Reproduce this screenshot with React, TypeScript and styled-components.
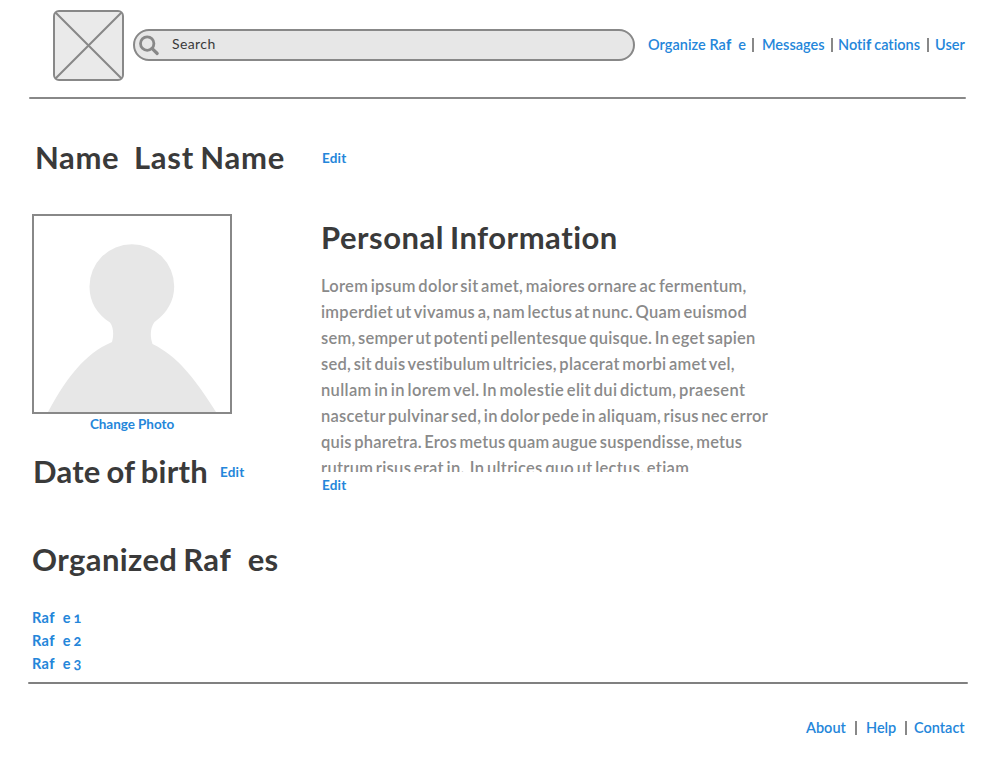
import React from "react";
import styled, { createGlobalStyle } from "styled-components";

const GlobalStyle = createGlobalStyle`
  * { box-sizing: border-box; }
  body {
    margin: 0;
    background: #fff;
    color: #3a3a3a;
    font-family: Lato, "Open Sans", sans-serif;
    font-variant-ligatures: none;
    font-variant-numeric: oldstyle-nums;
  }
`;

const Page = styled.div`
  width: 988px;
  height: 764px;
  overflow: hidden;
  display: flex;
  flex-direction: column;
`;

const Header = styled.header`
  height: 97px;
  flex: none;
  display: flex;
  align-items: flex-start;
  padding-left: 53px;
`;

const Logo = styled.svg`
  width: 71px;
  height: 71px;
  margin-top: 10px;
  flex: none;
`;

const SearchBox = styled.label`
  width: 502px;
  height: 32px;
  margin: 29px 0 0 9px;
  flex: none;
  display: flex;
  align-items: center;
  border: 2px solid #888;
  border-radius: 16px;
  background: #e7e7e7;
`;

const SearchIcon = styled.svg`
  width: 22px;
  height: 22px;
  margin-left: 3px;
`;

const SearchText = styled.span`
  margin: -3px 0 0 12px;
  font-size: 14px;
  letter-spacing: 0.4px;
`;

const HeaderNav = styled.nav`
  margin: 34px 0 0 13px;
  display: grid;
  grid-template-columns: 104px 10px 69px 7px 89px 8px auto;
  align-items: center;
  height: 22px;
`;

const FooterNav = styled.nav`
  align-self: flex-end;
  margin: 33px 23px 0 0;
  height: 22px;
  display: grid;
  grid-template-columns: 49px 11px 39px 9px 51px;
  align-items: center;
`;

const Link = styled.a<{ $size?: number; $ls?: number }>`
  color: #2486da;
  font-size: ${(p) => p.$size ?? 14.5}px;
  font-weight: 600;
  line-height: 20px;
  letter-spacing: ${(p) => p.$ls ?? 0}px;
  white-space: pre;
  text-decoration: none;
  cursor: pointer;
`;

const Separator = styled.i`
  width: 2px;
  height: 14px;
  background: #888;
`;

const Rule = styled.hr<{ $wide?: boolean }>`
  flex: none;
  width: ${(p) => (p.$wide ? 940 : 937)}px;
  height: 2px;
  margin: 0 0 0 ${(p) => (p.$wide ? 28 : 29)}px;
  border: 0;
  border-radius: 1px;
  background: ${(p) => (p.$wide ? "#808080" : "#888")};
`;

const HeavyF = styled.span<{ $gap: number }>`
  font-weight: 900;
  margin-right: ${(p) => p.$gap}px;
`;

const NameRow = styled.section`
  height: 115px;
  flex: none;
  display: grid;
  grid-template-columns: 99px 188px auto;
  padding: 39px 0 0 35px;
`;

const Heading = styled.h1<{ $ls: number }>`
  margin: 0;
  height: 40px;
  font-size: 31px;
  font-weight: 700;
  line-height: 39px;
  letter-spacing: ${(p) => p.$ls}px;
  word-spacing: -2px;
  white-space: pre;
`;

const RowEdit = styled(Link)`
  line-height: 40px;
  font-weight: 700;
`;

const Profile = styled.main`
  height: 468px;
  flex: none;
  display: grid;
  grid-template-columns: 289px 470px;
  padding-left: 32px;
`;

const Column = styled.div`
  display: flex;
  flex-direction: column;
`;

const Photo = styled.svg`
  width: 200px;
  height: 200px;
  border: 2px solid #888;
  flex: none;
`;

const PhotoLink = styled(Link)`
  width: 200px;
  line-height: 21px;
  margin-bottom: -1px;
  font-weight: 700;
  text-align: center;
`;

const BirthRow = styled.div`
  display: flex;
  height: 88px;
  margin-top: 18px;
`;

const BirthHeading = styled(Heading)`
  width: 188px;
  padding-left: 1px;
`;

const RaffleList = styled.ul`
  margin: 25px 0 0;
  padding: 0;
  list-style: none;
  display: flex;
  flex-direction: column;
`;

const RaffleItem = styled.li`
  height: 23px;
  line-height: 23px;
`;

const RaffleLink = styled(Link)`
  font-weight: 700;
  word-spacing: -1px;
`;

const InfoHeading = styled(Heading)`
  margin-top: 4px;
`;

const Bio = styled.div`
  height: 200px;
  margin-top: 14px;
  padding-top: 1px;
  overflow: hidden;
  color: #8a8a8a;
`;

const BioLine = styled.div<{ $ls: number }>`
  font-size: 16.5px;
  font-weight: 600;
  line-height: 26px;
  letter-spacing: ${(p) => p.$ls}px;
  word-spacing: -1.8px;
  white-space: pre;
`;

const InfoEdit = styled(Link)`
  margin: 3px 0 0 1px;
  font-weight: 700;
`;

const bio: [string, number][] = [
  ["Lorem ipsum dolor sit amet, maiores ornare ac fermentum,", 0.29],
  ["imperdiet ut vivamus a, nam lectus at nunc. Quam euismod", 0.26],
  ["sem, semper ut potenti pellentesque quisque. In eget sapien", 0.24],
  ["sed, sit duis vestibulum ultricies, placerat morbi amet vel,", 0.27],
  ["nullam in in lorem vel. In molestie elit dui dictum, praesent", 0.34],
  ["nascetur pulvinar sed, in dolor pede in aliquam, risus nec error", 0.26],
  ["quis pharetra. Eros metus quam augue suspendisse, metus", 0.22],
  ["rutrum risus erat in.  In ultrices quo ut lectus, etiam", 0.3],
];

export default function App() {
  return (
    <Page>
      <GlobalStyle />
      <Header>
        <Logo viewBox="0 0 71 71" fill="#eaeaea" stroke="#888" strokeWidth="2">
          <rect x="1" y="1" width="69" height="69" rx="5" />
          <path d="M2.5 2.5 68.5 68.5M68.5 2.5 2.5 68.5" />
        </Logo>
        <SearchBox>
          <SearchIcon viewBox="0 0 22 22" fill="none" stroke="#888">
            <circle cx="9.2" cy="9.6" r="6.7" strokeWidth="2.8" />
            <path d="m14.2 14.6 5 4.9" strokeWidth="3.2" strokeLinecap="round" />
          </SearchIcon>
          <SearchText>Search</SearchText>
        </SearchBox>
        <HeaderNav>
          <Link $ls={0.03}>Organize Ra<HeavyF $gap={7}>f</HeavyF>e</Link>
          <Separator />
          <Link>Messages</Link>
          <Separator />
          <Link>Noti<HeavyF $gap={3}>f</HeavyF>cations</Link>
          <Separator />
          <Link>User</Link>
        </HeaderNav>
      </Header>
      <Rule />
      <NameRow>
        <Heading $ls={0.6}>Name</Heading>
        <Heading $ls={0.75}>Last Name</Heading>
        <RowEdit $size={13.5} $ls={0.2}>Edit</RowEdit>
      </NameRow>
      <Profile>
        <Column>
          <Photo viewBox="0 0 196 196" fill="#e7e7e7">
            <path d="M14 196C32 163 50 138 78 126C80 119 79.500 111 76 106.500C63 98 55.500 86 55.500 70.500A42.300 42.300 0 0 1 140.200 70.500C140.200 85 133 97 120.500 106C116 112 116 121 118.500 128C143 140 160 161 182 196Z" />
          </Photo>
          <PhotoLink $size={13.5} $ls={-0.05}>Change Photo</PhotoLink>
          <BirthRow>
            <BirthHeading $ls={0.25}>Date of birth</BirthHeading>
            <RowEdit $size={13.5} $ls={0.2}>Edit</RowEdit>
          </BirthRow>
          <Heading as="h2" $ls={0.4}>Organized Ra<HeavyF $gap={16.5}>f</HeavyF>es</Heading>
          <RaffleList>
            {[1, 2, 3].map((n) => (
              <RaffleItem key={n}>
                <RaffleLink $ls={0.3}>Ra<HeavyF $gap={8}>f</HeavyF>e {n}</RaffleLink>
              </RaffleItem>
            ))}
          </RaffleList>
        </Column>
        <Column>
          <InfoHeading as="h2" $ls={0.5}>Personal Information</InfoHeading>
          <Bio>
            {bio.map(([line, spacing]) => (
              <BioLine key={line} $ls={spacing}>{line}</BioLine>
            ))}
          </Bio>
          <InfoEdit $size={13.5} $ls={0.2}>Edit</InfoEdit>
        </Column>
      </Profile>
      <Rule $wide />
      <FooterNav>
        <Link>About</Link>
        <Separator />
        <Link>Help</Link>
        <Separator />
        <Link>Contact</Link>
      </FooterNav>
    </Page>
  );
}
